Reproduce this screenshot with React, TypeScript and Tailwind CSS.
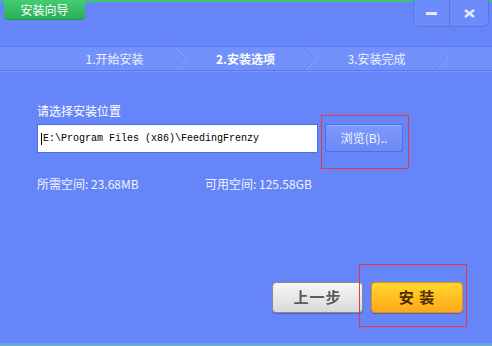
import { useState } from 'react';

const steps = [
  { label: '1.开始安装', active: false },
  { label: '2.安装选项', active: true },
  { label: '3.安装完成', active: false },
];

function Chevron() {
  return (
    <svg className="absolute right-[-7px] top-0" width="14" height="23" viewBox="0 0 14 23">
      <polyline points="0,0 12,11.5 0,23" fill="none" stroke="#5b7af0" strokeWidth="1" />
      <polyline points="1,0 13,11.5 1,23" fill="none" stroke="#8ea6fd" strokeWidth="1" />
    </svg>
  );
}

export default function App() {
  const [path] = useState('E:\\Program Files (x86)\\FeedingFrenzy');

  return (
    <div
      className="relative w-[492px] h-[346px] overflow-hidden bg-[#6685f8] flex flex-col text-[12px] text-white"
      style={{ fontFamily: '"SimSun", "Noto Sans CJK SC", sans-serif' }}
    >
      {/* 顶部标题栏 */}
      <div className="h-[46px] border-t-[2px] border-[#3ec46c] flex justify-between items-start shrink-0">
        <div className="ml-[4px] -mt-[2px] w-[81px] h-[20px] rounded-b-[4px] bg-gradient-to-b from-[#45cc72] to-[#2aae58] border-b border-[#249a4c] flex items-center justify-center leading-none">
          安装向导
        </div>
        <div className="mr-[3px] -mt-[2px] h-[27px] flex rounded-b-[6px] border border-t-0 border-[#5676ec] bg-[#6d8bf9] overflow-hidden">
          <div className="w-[36px] flex items-center justify-center border-r border-[#5676ec]">
            <div className="w-[11px] h-[3px] bg-[#e6ecff]" />
          </div>
          <div className="w-[38px] flex items-center justify-center">
            <svg width="11" height="9" viewBox="0 0 11 9">
              <path d="M1 1 L10 8 M10 1 L1 8" stroke="#e6ecff" strokeWidth="2.4" />
            </svg>
          </div>
        </div>
      </div>

      {/* 步骤条 */}
      <div className="h-[25px] shrink-0 border-t border-b border-[#5a79ee] bg-[#7391fb] flex pl-[49px] shadow-[0_1px_0_#7b96fb]">
        {steps.map((s) => (
          <div
            key={s.label}
            className={
              'relative w-[131px] flex items-center justify-center leading-none ' +
              (s.active ? 'font-bold text-white' : 'text-[#eef2ff]')
            }
          >
            {s.label}
            <Chevron />
          </div>
        ))}
      </div>

      {/* 安装位置 */}
      <div className="pl-[37px] mt-[33px] leading-[14px]">请选择安装位置</div>
      <div className="pl-[37px] mt-[6px] flex items-start gap-[7px]">
        <div className="w-[281px] h-[29px] bg-white border border-[#4e6ee4] flex items-center pl-[3px] overflow-hidden">
          <span className="w-px h-[12px] bg-black mr-[1px]" />
          <span
            className="text-[10px] text-black whitespace-nowrap"
            style={{ fontFamily: '"Liberation Mono", monospace' }}
          >
            {path}
          </span>
        </div>
        <button className="w-[78px] h-[28px] rounded-[2px] border border-[#4f6fe2] bg-gradient-to-b from-[#7f99fd] to-[#6b89f8] text-[#f2f5ff] text-[12px] flex items-center justify-center shadow-[inset_0_1px_0_#98aefe]">
          浏览(B)..
        </button>
      </div>

      <div className="pl-[37px] mt-[24px] flex leading-[14px] text-[#f0f4ff]">
        <span className="w-[168px]">所需空间: 23.68MB</span>
        <span>可用空间: 125.58GB</span>
      </div>

      {/* 底部按钮 */}
      <div className="flex-1 flex items-end justify-end pr-[29px] pb-[30px] gap-[8px]">
        <button className="w-[91px] h-[31px] rounded-[4px] border border-[#8a8a8a] bg-gradient-to-b from-[#f7f7f7] to-[#d9d9d9] text-[#5a5a5a] text-[15px] font-bold tracking-[1px] shadow-[0_1px_1px_rgba(0,0,0,0.25)]">
          上一步
        </button>
        <button className="w-[92px] h-[31px] rounded-[4px] border border-[#e3900e] bg-gradient-to-b from-[#ffd82c] to-[#ffa817] text-[#4d2a00] text-[15px] font-bold tracking-[1px] shadow-[0_1px_1px_rgba(0,0,0,0.25)]">
          安 装
        </button>
      </div>

      <div className="h-[2px] bg-[#7b95fb] shrink-0" />
      <div className="h-[1px] bg-[#58c7a6] shrink-0" />

      {/* 标注框 */}
      <div className="absolute left-[321px] top-[115px] w-[88px] h-[54px] border border-[#e8383d] pointer-events-none" />
      <div className="absolute left-[359px] top-[264px] w-[108px] h-[63px] border border-[#e8383d] pointer-events-none" />
    </div>
  );
}
